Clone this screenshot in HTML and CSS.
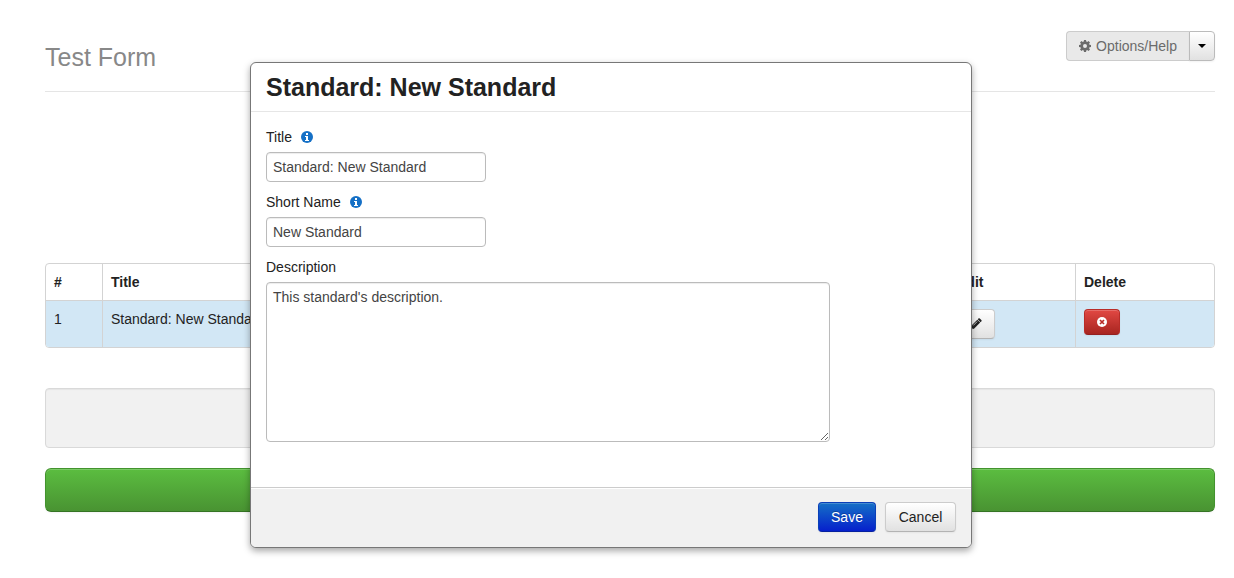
FILE: index.html
```html
<!DOCTYPE html>
<html lang="en">
<head>
<meta charset="utf-8">
<meta name="viewport" content="width=device-width, initial-scale=1">
<title>Test Form</title>
<link rel="stylesheet" href="styles.css">
</head>
<body>
<main class="page">
  <header class="page-header">
    <h1 class="page-title">Test Form</h1>
    <div class="btn-group">
      <button class="btn btn-options" type="button" disabled>
        <svg class="icon-cog" viewBox="0 0 12 12" aria-hidden="true"><path fill="currentColor" fill-rule="evenodd" d="M5 0h2l.3 1.500.9.400 1.300-.900L11 2.500l-.900 1.300.400.900L12 5v2l-1.500.3-.4.900.9 1.300L9.500 11l-1.300-.9-.9.400L7 12H5l-.3-1.500-.9-.4-1.300.9L1 9.500l.9-1.300-.4-.9L0 7V5l1.500-.3.400-.900L1 2.500 2.500 1l1.300.9.900-.4zM6 4a2 2 0 1 0 0 4 2 2 0 0 0 0-4z"/></svg>
        Options/Help
      </button>
      <button class="btn btn-caret" type="button" aria-label="More options"><span class="caret"></span></button>
    </div>
  </header>

  <table class="standards">
    <thead>
      <tr><th class="col-number">#</th><th>Title</th><th class="col-edit">Edit</th><th class="col-delete">Delete</th></tr>
    </thead>
    <tbody>
      <tr>
        <td>1</td>
        <td>Standard: New Standard</td>
        <td><button class="btn" type="button" aria-label="Edit"><svg class="icon-pencil" viewBox="0 0 12 12" aria-hidden="true"><path fill="currentColor" d="M8.400.600q.7-.7 1.400 0l1.500 1.500q.7.7 0 1.400l-.7.700-2.900-2.900zM7.300 1.700l2.900 2.900-6.200 6.100L.400 11.600l.7-3.700z"/><path stroke="#fff" stroke-width=".7" d="m3.200 7.500 4-4M1.300 9.600l1.100 1.100"/></svg></button></td>
        <td><button class="btn btn-danger" type="button" aria-label="Delete"><svg class="icon-remove" viewBox="0 0 10 10" aria-hidden="true"><circle cx="5" cy="5" r="5" fill="#fff"/><path stroke="#b92c28" stroke-width="1.700" d="m3 3 4 4m0-4L3 7"/></svg></button></td>
      </tr>
    </tbody>
  </table>

  <div class="well"></div>
  <button class="btn-submit" type="button" aria-label="Submit"></button>
</main>

<div class="overlay">
  <form class="modal" role="dialog" aria-labelledby="modal-title">
    <header class="modal-header"><h2 class="modal-title" id="modal-title">Standard: New Standard</h2></header>
    <div class="modal-body">
      <div class="label-row">
        <label for="title">Title</label>
        <svg class="icon-info" viewBox="0 0 12 12" aria-hidden="true"><circle cx="6" cy="6" r="6" fill="#1570c6"/><path fill="#fff" d="M5 2h2v2H5zM4 5h3v4h1v1H4V9h1V6H4z"/></svg>
      </div>
      <input class="field" id="title" type="text" value="Standard: New Standard">
      <div class="label-row">
        <label for="short-name">Short Name</label>
        <svg class="icon-info" viewBox="0 0 12 12" aria-hidden="true"><circle cx="6" cy="6" r="6" fill="#1570c6"/><path fill="#fff" d="M5 2h2v2H5zM4 5h3v4h1v1H4V9h1V6H4z"/></svg>
      </div>
      <input class="field" id="short-name" type="text" value="New Standard">
      <div class="label-row"><label for="description">Description</label></div>
      <textarea class="field field-area" id="description" rows="7">This standard's description.</textarea>
    </div>
    <footer class="modal-footer">
      <button class="btn btn-primary" type="button">Save</button>
      <button class="btn btn-cancel" type="button">Cancel</button>
    </footer>
  </form>
</div>
</body>
</html>
```
FILE: styles.css
```css
* { box-sizing: border-box; }

body {
  margin: 0;
  background: #fff;
  color: #222;
  font: 14px/20px "Liberation Sans", Arial, sans-serif;
}

.page { padding: 31px 19px 31px 45px; }

.page-header {
  display: flex;
  justify-content: space-between;
  align-items: flex-start;
  height: 61px;
  border-bottom: 1px solid #e5e5e5;
}

.page-title {
  margin: 6px 0 0;
  color: #888;
  font-size: 25px;
  font-weight: 400;
  line-height: 40px;
}

.btn {
  padding: 4px 12px;
  border: 1px solid #bbb;
  border-color: #ccc #ccc #b3b3b3;
  border-radius: 4px;
  background: linear-gradient(#fff, #e1e1e1);
  box-shadow: inset 0 1px 0 rgba(255, 255, 255, .2), 0 1px 2px rgba(0, 0, 0, .05);
  color: #222;
  font: inherit;
}

.btn-group { display: flex; }

.btn-options {
  display: flex;
  align-items: center;
  gap: 5px;
  border-color: #ccc;
  border-right: 0;
  border-radius: 4px 0 0 4px;
  background: #e9e9e9;
  box-shadow: none;
  color: #6b6b6b;
}

.btn-caret {
  padding: 4px 8px;
  border-color: #bbb;
  border-radius: 0 4px 4px 0;
}

.caret {
  display: block;
  border: 4px solid transparent;
  border-top-color: #000;
  border-bottom: 0;
}

.icon-cog,
.icon-pencil,
.icon-info { width: 12px; height: 12px; }

.standards {
  width: 100%;
  margin-top: 171px;
  border: 1px solid #d3d3d3;
  border-radius: 4px;
  border-spacing: 0;
  border-collapse: separate;
  table-layout: fixed;
  overflow: hidden;
}

.standards th,
.standards td {
  padding: 8px;
  text-align: left;
  vertical-align: top;
}

.standards th + th,
.standards td + td { border-left: 1px solid #d3d3d3; }

.standards td {
  height: 47px;
  border-top: 1px solid #d3d3d3;
  background: #d2e7f5;
}

.standards .btn { display: block; height: 30px; }

.col-number { width: 56px; }
.col-edit { width: 127px; }
.col-delete { width: 139px; }

.standards .btn-danger {
  height: 26px;
  border-color: #b92c28 #b92c28 #952020;
  background: linear-gradient(#e14843, #a82520);
}

.icon-pencil { display: block; }
.icon-remove { display: block; width: 10px; height: 10px; }

.well {
  height: 60px;
  margin: 40px 0 20px;
  border: 1px solid #d9d9d9;
  border-radius: 4px;
  background: #f1f1f1;
  box-shadow: inset 0 1px 1px rgba(0, 0, 0, .05);
}

.btn-submit {
  display: block;
  width: 100%;
  height: 44px;
  border: 1px solid #43932e;
  border-bottom-color: #357424;
  border-radius: 6px;
  background: linear-gradient(#5bbd40, #499332);
  box-shadow: inset 0 1px 0 rgba(255, 255, 255, .2), 0 1px 2px rgba(0, 0, 0, .05);
}

.overlay {
  position: absolute;
  inset: 0;
  display: flex;
  justify-content: center;
  align-items: flex-start;
  padding: 62px 12px 0 0;
}

.modal {
  width: 722px;
  border: 1px solid #777;
  border-radius: 6px;
  background: #fff;
  box-shadow: 0 3px 7px rgba(0, 0, 0, .35);
}

.modal-header {
  padding: 9px 15px;
  border-bottom: 1px solid #e6e6e6;
}

.modal-title {
  margin: 0;
  font-size: 25px;
  line-height: 30px;
}

.modal-body { padding: 15px 15px 35px; }

.label-row {
  display: flex;
  align-items: center;
  gap: 9px;
  margin-bottom: 5px;
}

.field {
  display: block;
  width: 220px;
  height: 30px;
  margin: 0 0 10px;
  padding: 4px 6px;
  border: 1px solid #bbb;
  border-radius: 4px;
  background: #fff;
  box-shadow: inset 0 1px 1px rgba(0, 0, 0, .075);
  color: #444;
  font: inherit;
}

.field-area {
  width: 564px;
  max-width: 100%;
  height: 160px;
}

.modal-footer {
  display: flex;
  justify-content: flex-end;
  gap: 9px;
  padding: 14px 15px 15px;
  border-top: 1px solid #ccc;
  border-radius: 0 0 5px 5px;
  background: #f1f1f1;
  box-shadow: inset 0 1px 0 #fff;
}

.btn-primary,
.btn-cancel { padding: 4px 0; }

.btn-cancel { width: 71px; }

.btn-primary {
  width: 58px;
  border-color: #0a3fb8 #0a3fb8 #0620a0;
  background: linear-gradient(#1570c6, #0620cc);
  color: #fff;
  text-shadow: 0 -1px 0 rgba(0, 0, 0, .25);
}
```
